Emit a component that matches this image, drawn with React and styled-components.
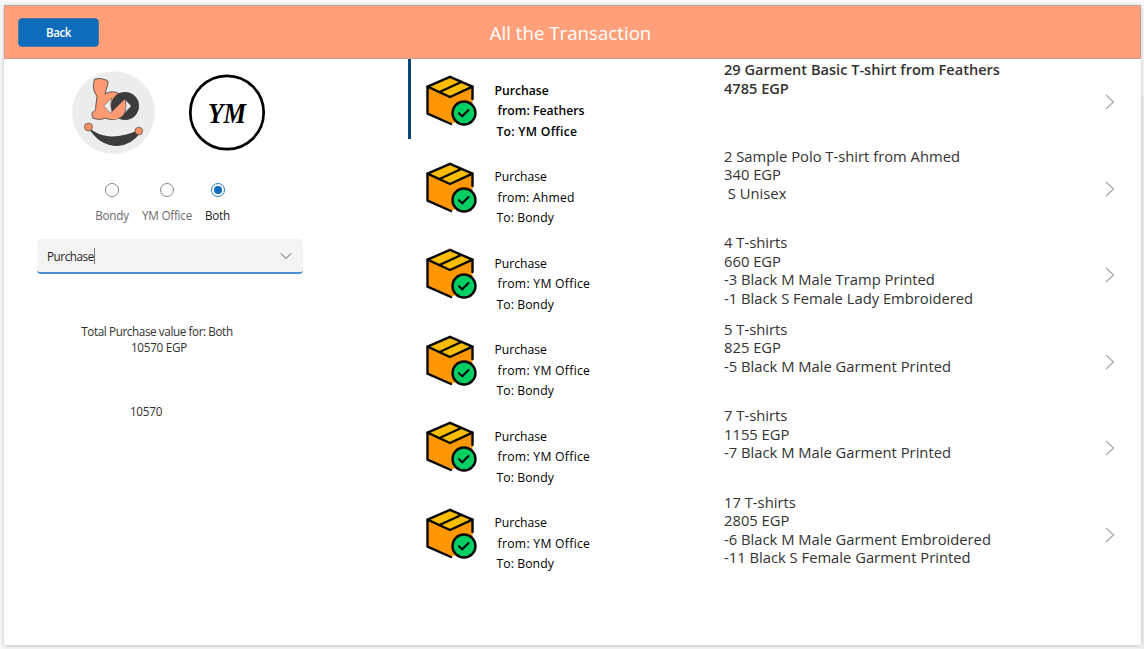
import React from "react";
import styled, { createGlobalStyle } from "styled-components";

const Global = createGlobalStyle`
  * { box-sizing: border-box; }
  body { margin: 0; background: #f7f7f7; font-family: "Open Sans", "Noto Sans", sans-serif; overflow: hidden; }
`;
const Page = styled.div`
  height: 649px;
  padding: 5px 3px 4px 4px;
  background: linear-gradient(to left, #f1f1f1 3px, transparent 3px) 0 96px no-repeat, #fafafa;
`;
const Card = styled.main`
  height: 640px;
  display: flex;
  flex-direction: column;
  background: #fff;
  box-shadow: 0 1px 5px rgba(0, 0, 0, 0.24);
`;
const Header = styled.header`
  height: 54px;
  flex: none;
  display: grid;
  grid-template-columns: 1fr auto 1fr;
  align-items: center;
  padding: 0 14px 0 13px;
  background: #ffa07a;
  border: 1px solid #cd9b8b;
  border-top-color: #b9a5a2;
`;
const BackButton = styled.button`
  width: 81px;
  height: 29px;
  padding: 0;
  border: 1px solid #4678a8;
  border-radius: 4px;
  background: #0f6cbd;
  color: #fff;
  font: 600 11.6px/27px "Open Sans", sans-serif;
  letter-spacing: -0.4px;
`;
const Title = styled.h1`
  margin: 2px 3px 0 0;
  color: #fff;
  font-size: 18.7px;
  font-weight: 400;
  line-height: 26px;
`;
const Body = styled.div`
  flex: 1;
  display: flex;
  min-height: 0;
`;
const Sidebar = styled.aside`
  width: 404px;
  display: flex;
  flex-direction: column;
  align-items: flex-start;
`;
const Logos = styled.div`
  display: flex;
  align-items: flex-start;
  gap: 33px;
  padding: 12px 0 0 68px;
  svg { display: block; }
  svg + svg { margin-top: 2px; }
`;
const Radios = styled.div`
  display: flex;
  margin: 29px 0 0 83px;
`;
const RadioItem = styled.label`
  width: ${(p) => p.$w}px;
  display: flex;
  flex-direction: column;
  align-items: center;
  gap: 9px;
  font-size: 11.7px;
  line-height: 18px;
  letter-spacing: -0.25px;
  white-space: nowrap;
  color: ${(p) => (p.$on ? "#242424" : "#6b6b6b")};
`;
const Dot = styled.span`
  width: 14px;
  height: 14px;
  padding: 2px;
  border: 1px solid ${(p) => (p.$on ? "#2b7cc4" : "#8a8a8a")};
  border-radius: 50%;
  background: #fff;
  &::before {
    content: "";
    display: block;
    width: 8px;
    height: 8px;
    border-radius: 50%;
    background: ${(p) => (p.$on ? "#0f6cbd" : "#fff")};
  }
`;
const Select = styled.div`
  width: 266px;
  height: 35px;
  display: flex;
  align-items: center;
  margin: 15px 0 0 33px;
  padding: 1px 11px 0 10px;
  border-bottom: 2px solid #4a8fce;
  border-radius: 4px;
  background: #f4f4f4;
  color: #242424;
  font-size: 11.7px;
  letter-spacing: -0.45px;
`;
const Caret = styled.span`
  width: 1px;
  height: 16px;
  margin-right: auto;
  background: #777;
`;
const Summary = styled.p`
  width: 200px;
  margin: ${(p) => p.$top}px 0 0 ${(p) => p.$left}px;
  text-align: center;
  color: #323130;
  font-size: 11.7px;
  line-height: 16px;
  letter-spacing: ${(p) => p.$track ?? -0.25}px;
`;
const List = styled.section`
  flex: 1;
  display: flex;
  flex-direction: column;
`;
const Row = styled.article`
  height: 86.5px;
  display: flex;
  font-weight: ${(p) => (p.$on ? 600 : 400)};
`;
const Marker = styled.span`
  width: 3px;
  height: 80px;
  background: ${(p) => (p.$on ? "#0b4677" : "transparent")};
`;
const BoxArt = styled.svg`
  width: 54px;
  height: 54px;
  margin: 16px 0 0 14px;
  flex: none;
`;
const Route = styled.div`
  width: 230px;
  margin-left: 15.4px;
  padding-top: 21.5px;
  color: #000;
  font-size: 12.2px;
`;
const RouteLine = styled.div`
  padding-left: ${(p) => p.$indent || 0}px;
  line-height: ${(p) => p.$lh || 20.5}px;
  letter-spacing: ${(p) => p.$track || 0}px;
`;
const Details = styled.div`
  width: 381px;
  padding-top: 1px;
  margin-left: -0.4px;
  color: #333;
  font-size: ${(p) => (p.$on ? 14.58 : 14.78)}px;
  line-height: 18.65px;
  white-space: pre;
`;
const Arrow = styled.svg`
  width: 10px;
  height: 16px;
  margin-top: 35.4px;
`;

const ROWS = [
  ["Feathers", "YM Office", "29 Garment Basic T-shirt from Feathers\n4785 EGP"],
  ["Ahmed", "Bondy", "2 Sample Polo T-shirt from Ahmed\n340 EGP\n S Unisex"],
  ["YM Office", "Bondy", "4 T-shirts\n660 EGP\n-3 Black M Male Tramp Printed\n-1 Black S Female Lady Embroidered"],
  ["YM Office", "Bondy", "5 T-shirts\n825 EGP\n-5 Black M Male Garment Printed"],
  ["YM Office", "Bondy", "7 T-shirts\n1155 EGP\n-7 Black M Male Garment Printed"],
  ["YM Office", "Bondy", "17 T-shirts\n2805 EGP\n-6 Black M Male Garment Embroidered\n-11 Black S Female Garment Printed"],
];
const TRACK = { "YM Office": 0.28, Ahmed: 0.2, Bondy: 0.1, Feathers: 0.02 };

const BondyLogo = () => (
  <svg width="83" height="83" viewBox="36 35 249 249">
    <circle cx="160.500" cy="159.500" r="124" fill="#eceeee" />
    <path d="M103 60Q120 53 141 63Q147 67 143 76L135 104Q147 96 160 97Q200 103 199 140Q197 174 166 180Q150 182 136 177Q119 184 99 177Q94 168 97 159Q109 154 107 143L111 112Q99 94 100 78Z" fill="#ff9b73" stroke="#454545" strokeWidth="2.500" />
    <circle cx="195" cy="140" r="42" fill="#3c3c3c" />
    <path d="M152 162L194 120Q203 143 193 162Q183 177 166 180Q152 181 145 170Z" fill="#ff9b73" />
    <path d="M131 140L155 116Q149 134 155 158L152 162ZM196 121L214 140L195 160Q201 140 196 121Z" fill="#eceeee" stroke="#454545" strokeWidth="1.500" />
    <path d="M85 204Q113 228 145 231Q190 234 234 213L240 222Q215 257 173 260Q116 260 85 204Z" fill="#3c3c3c" />
    <g fill="#ff8f65" stroke="#454545" strokeWidth="2"><circle cx="85.500" cy="203" r="12" /><circle cx="236.500" cy="215" r="11.500" /></g>
  </svg>
);
const YMLogo = () => (
  <svg width="78" height="78" viewBox="0 0 78 78">
    <circle cx="39" cy="39.500" r="36.700" fill="#fff" stroke="#000" strokeWidth="2.700" />
    <text x="39" y="49.500" textAnchor="middle" textLength="38" lengthAdjust="spacingAndGlyphs" fontFamily="Liberation Serif, serif" fontStyle="italic" fontWeight="700" fontSize="30">YM</text>
  </svg>
);
const BoxIcon = () => (
  <BoxArt viewBox="0 0 54 54" fill="none" stroke="#080808" strokeWidth="2.400" strokeLinejoin="round" strokeLinecap="round">
    <path d="M2.500 12L25 22L47.500 12V40L26 49L2.500 39Z" fill="#ff9800" stroke="none" />
    <path d="M2.500 11.700L25 1.800L47.500 11.700L25 22Z" fill="#fbbc04" />
    <path d="M36.300 7L14.500 17" />
    <path d="M2.500 11.700V38.700L26 49M47.500 11.700V24" />
    <circle cx="39" cy="38" r="11.500" fill="#00cf63" />
    <path d="M34 38.200L37.300 41.300L43.500 35" strokeWidth="2.100" strokeLinejoin="miter" />
  </BoxArt>
);

export default function App() {
  return (
    <>
      <Global />
      <Page>
        <Card>
          <Header>
            <BackButton>Back</BackButton>
            <Title>All the Transaction</Title>
          </Header>
          <Body>
            <Sidebar>
              <Logos><BondyLogo /><YMLogo /></Logos>
              <Radios>
                {[["Bondy", 50], ["YM Office", 60], ["Both", 41]].map(([name, w]) => (
                  <RadioItem key={name} $w={w} $on={name === "Both"}>
                    <Dot $on={name === "Both"} />{name}
                  </RadioItem>
                ))}
              </Radios>
              <Select>
                Purchase<Caret />
                <svg width="12" height="8" viewBox="0 0 12 8" fill="none" stroke="#555"><path d="M1 1.500L6 6.500L11 1.500" /></svg>
              </Select>
              <Summary $left={53} $top={49} $track={-0.4}>Total Purchase value for: Both</Summary>
              <Summary $left={55} $top={0}>10570 EGP</Summary>
              <Summary $left={42} $top={48}>10570</Summary>
            </Sidebar>
            <List>
              {ROWS.map(([from, to, text], i) => (
                <Row key={i} $on={i === 0}>
                  <Marker $on={i === 0} />
                  <BoxIcon />
                  <Route>
                    <RouteLine>Purchase</RouteLine>
                    <RouteLine $indent={3.2} $lh={19.6} $track={TRACK[from]}>from: {from}</RouteLine>
                    <RouteLine $indent={2} $lh={22.4} $track={TRACK[to]}>To: {to}</RouteLine>
                  </Route>
                  <Details $on={i === 0}>{text}</Details>
                  <Arrow viewBox="0 0 10 16" fill="none" stroke="#a6a6a6" strokeWidth="1.200"><path d="M1 1L8.500 8L1 15" /></Arrow>
                </Row>
              ))}
            </List>
          </Body>
        </Card>
      </Page>
    </>
  );
}
